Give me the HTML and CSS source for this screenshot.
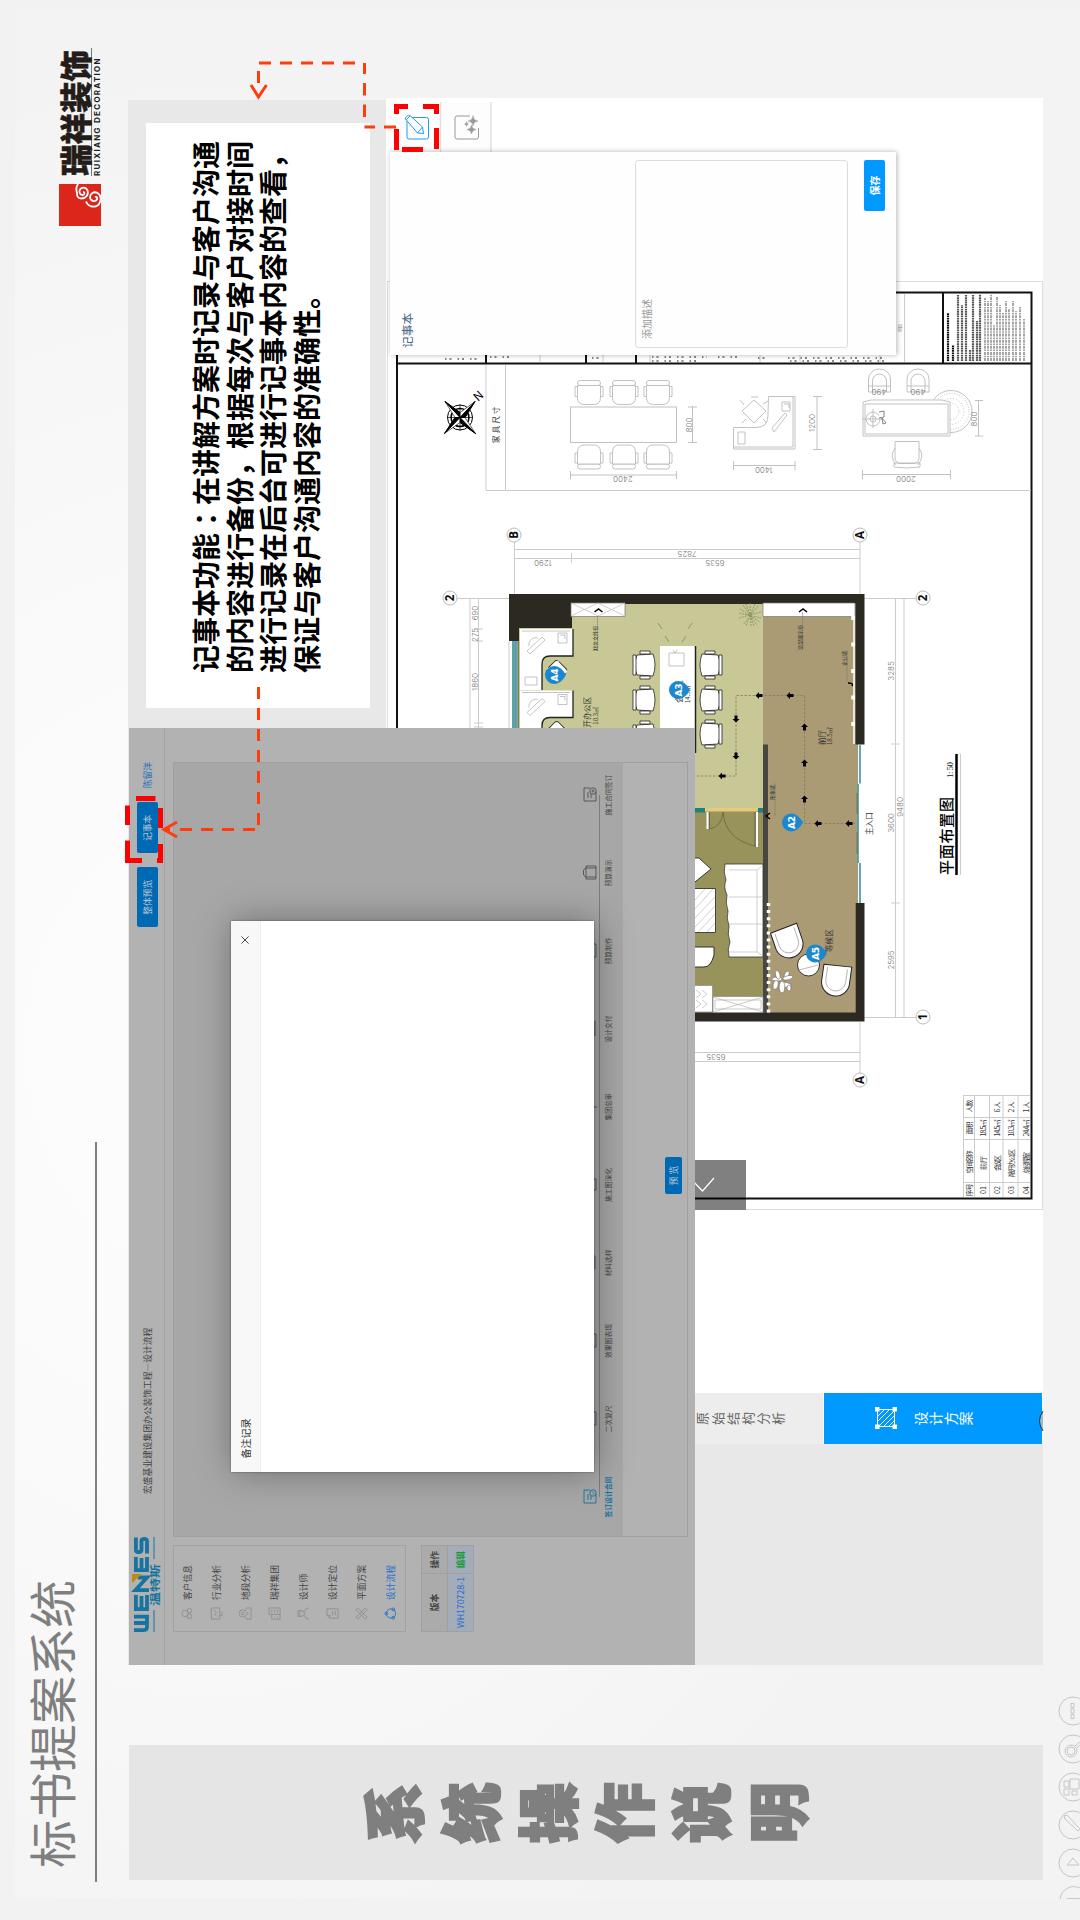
FILE: index.html
```html
<!DOCTYPE html>
<html lang="zh-CN">
<head>
<meta charset="utf-8">
<title>标书提案系统</title>
<link rel="stylesheet" href="styles.css">
</head>
<body>
<!-- A 1920x1080 slide turned a quarter turn counter-clockwise. -->
<main class="slide">
  <div class="paper"></div>
  <h1 class="title">标书提案系统</h1>
  <div class="rule"></div>

  <div class="brand">
    <svg class="brand-mark" viewBox="0 0 42 42">
      <rect width="42" height="42" fill="#dc261c"/>
      <g fill="none" stroke="#fff" stroke-width="1.800">
        <path d="M34 24c0 2-3 2-3-.5s3-4 5.500-2.500 3 6-1 7.500-8-1.500-8-6 3-4.500 6-4.500"/>
        <path d="M29 36c1 2-2 3-3.500 1s0-6 3.500-6 6 4 4 7.500-6 3.500-9 2.500-5-4-4.500-8 3-5 5-6"/>
        <path d="M33 18c3-1 6-1 9 1"/>
      </g>
    </svg>
    <div class="brand-name"><b>瑞祥装饰</b><i>RUIXIANG DECORATION</i></div>
  </div>

  <aside class="chapter"><span>系</span><span>统</span><span>操</span><span>作</span><span>说</span><span>明</span></aside>

  <section class="board"></section>
  <section class="note-card">
    <p>记事本功能<span lang="zh-TW">：</span>在讲解方案时记录与客户沟通<br>的内容进行备份，根据每次与客户对接时间<br>进行记录在后台可进行记事本内容的查看，<br>保证与客户沟通内容的准确性。</p>
  </section>

  <!-- design plan screen -->
  <section class="viewer">
    <nav class="tabs">
      <div class="tab"><span>原始结构分析</span></div>
      <div class="tab on">
        <svg width="22" height="22" viewBox="0 0 22 22" fill="none" stroke="#fff"><path d="M2.500 2.500h17v17h-17zM3 14l5 5M3 9l10 10M3 4l15 15M8 3l11 11M13 3l6 6"/><path d="M0 0h4.500v4.500H0zM17.500 0H22v4.500h-4.500zM0 17.500h4.500V22H0zM17.500 17.500H22V22h-4.500z" fill="#fff" stroke="none"/></svg>
        <span>设计方案</span>
      </div>
    </nav>
  </section>

  <svg class="layer" viewBox="0 0 1920 1080">
    <defs>
      <g id="seat"><rect x="-11.500" y="-12" width="23" height="5" rx="2.500"/><path d="M-11.500-7h23v12q0 7-7 7h-9q-7 0-7-7zM-11.500-6h-2.500V4h2.500M11.500-6H14V4h-2.500"/></g>
      <g id="chair"><path d="M-10-8Q0-12 10-8L11 8Q0 12-11 8z" transform="rotate(90)" fill="#fff" stroke="#222" stroke-width=".8"/><path d="M9-10h3v20H9z" fill="#fff" stroke="#222" stroke-width=".8"/><path d="M-5-14H5v3H-5zM-5 11H5v3H-5z" fill="#fff" stroke="#222" stroke-width=".8"/></g>
      <g id="desk"><path d="M0 0h53v27H30q-8 0-8 8v26H0z" fill="#fff"/><path d="M53 0v27H30q-8 0-8 8v26" fill="none" stroke="#222" stroke-width="1.300"/><path d="M7 22L22 8l3 3L10 25zM9 17a7 7 0 0 1 9-8M38 4h9v10h-9zM40 6h5v4M5 48h12v8H5zM2 2h48" fill="none" stroke="#aaa" stroke-width=".7"/></g>
      <path id="arw" d="M-3.500 0L0-3.500V-1.500H3.500V1.500H0V3.500z"/>
      <path id="pin" d="M12 0Q7 9 0 9A9 9 0 1 1 0-9Q7-9 12 0z"/>
      <g id="lounge"><path d="M-14-13L14-14V2a14 14 0 0 1-28 2z" fill="#fff" stroke="#222"/><path d="M-10-11V2a10 10 0 0 0 20 0V-11" fill="none" stroke="#999" stroke-width=".7"/></g>
      <g id="armchair" fill="none"><path d="M-11 11V-2a11 10 0 0 1 22 0v13zM-7 11V0a7 7 0 0 1 14 0v11M-11 5H11"/></g>
    </defs>
    <g transform="translate(1920 0) rotate(90)">
      <!-- sheet frame -->
      <rect x="387.500" y="281.500" width="655" height="928" fill="#fff" stroke="#ddd"/>
      <path d="M397 292.500H1031.500V1198.500H397z" fill="none" stroke="#111" stroke-width="2"/>
      <path d="M397 363.500H1031M943 293v70M486 355v8M586 355v8M636 355v8" stroke="#111" stroke-width="2"/>
      <path d="M904.500 294v68M505.500 365v125M486 365v125.500H1031M540 355v7M603 355v7M650 355v7M760 355v7M800 355v7M880 355v7" fill="none" stroke="#ccc"/>
      <path d="M445 359h36M490 357h25M592 358h10M652 357h55M718 357h20M758 358h12M788 358h96M652 361h50M790 361h94" stroke="#888" stroke-width="2" stroke-dasharray="1.500 3 2 6"/>
      <g stroke="#555" stroke-width="2.200" stroke-dasharray="1.700 .6">
        <path d="M948 361v-48" stroke="#111"/><path d="M953 361v-16" stroke="#111"/><path d="M958 361v-66M962 361v-56M966 361v-66M970 361v-11M973 361v-66M977 361v-40M980 361v-67"/>
      </g>
      <path d="M985 361v-63M988 361v-60M991 361v-67M994 361v-36M997 361v-64M1000 361v-56M1003 361v-48M1006 361v-60M1009 361v-52M1013 361v-60M1016 361v-50M1020 361v-55M1024 361v-42" stroke="#777" stroke-width="1.300" stroke-dasharray="3 .8 1.500 .8"/>
      <text class="tiny" transform="translate(902 332) rotate(-90)">项目</text>

      <!-- compass -->
      <g transform="translate(460 417.500)" stroke="#000">
        <circle r="12.500" fill="none"/><circle r="9" fill="none" stroke-width="1.500"/><path d="M-13 0H13M0-13V13" stroke-width=".7"/>
        <path d="M-15-16L0-5 15-16 5 0 15.500 16 0 5-15.500 16-5 0z" fill="#fff" stroke-width=".6"/>
        <path d="M-15-16L0-5V0zM15-16L5 0H0zM15.500 16L0 5V0zM-15.500 16L-5 0H0z"/>
      </g>
      <text transform="translate(478 402) rotate(-42)" font-size="12">N</text>
      <text class="song" transform="translate(499 443) rotate(-90)" font-size="7.500" letter-spacing="2.200">家具尺寸</text>

      <!-- furniture samples -->
      <g fill="#fff" stroke="#bbb" stroke-width=".9">
        <rect x="570.500" y="407" width="106" height="35.500"/>
        <use href="#seat" x="589" y="392.500"/><use href="#seat" x="624" y="392.500"/><use href="#seat" x="658" y="392.500"/>
        <use href="#seat" transform="translate(589 457) scale(1 -1)"/><use href="#seat" transform="translate(624 457) scale(1 -1)"/><use href="#seat" transform="translate(658 457) scale(1 -1)"/>
        <path d="M692.500 406v37M688 407h9M688 442.500h9M570 475h106.500M570.500 471v8M676.500 471v8"/>
        <path d="M768.500 396.500H795V449H733.500V427.500H756q12 0 12-12zM733.500 447H793V397M738 432h7v12h-7zM772 428l13-15 2 2-13 17zM782 402h8v9h-8zM784 404h5v4"/>
        <path d="M754 400l12 11-12 12-12-12zM744 405l-4-5M763 404l5-3M763 419l4 4M746 419l-4 4M751 397h7"/>
        <path d="M817 396v53M813 396.500h9M813 449.500h9M733.500 465.500h62M733.500 461v9M795 461v9M978.500 400v36M975 400.500h8M975 436h8M862.500 474.500h88M862.500 470v9M950.500 470v9"/>
        <circle cx="951" cy="411.500" r="21"/><circle cx="951" cy="411.500" r="18" stroke-dasharray="1 1.500"/><circle cx="951" cy="411.500" r="13" stroke-dasharray="1 2"/><circle cx="951" cy="411.500" r="8" stroke-dasharray="1 2"/>
        <path d="M863 402l8-2h71l8 2v34h-87zM865 404h83v30h-83z"/>
        <circle cx="873" cy="419" r="7"/><circle cx="873" cy="419" r="3"/><path d="M862 419h20M873 409v19"/>
        <path d="M879 412l5-1v6l-5 1M882 418l4 5-3 1z" stroke="#777"/>
        <use href="#armchair" x="879.500" y="381"/><use href="#armchair" x="918" y="381"/>
        <path d="M895 441.500h24v17q0 3-4 5h-16q-4-2-4-5zM895 448q-6 8 1 17M919 448q6 8-1 17M894 463h26v4q-13 2-26 0z"/>
      </g>
      <g class="dim">
        <text transform="translate(692 425) rotate(-90)">800</text><text transform="translate(623 476) rotate(180)">2400</text>
        <text transform="translate(815 423) rotate(-90)">1200</text><text transform="translate(764 467) rotate(180)">1400</text>
        <text transform="translate(977 419) rotate(-90)">800</text><text transform="translate(906 476) rotate(180)">2000</text>
        <text transform="translate(879 389) rotate(180)">490</text><text transform="translate(918 389) rotate(180)">490</text>
      </g>

      <!-- axes and dimensions -->
      <path d="M514.500 542v52M860 542v52M514 549.500h346M514 558.500h346M571.500 553v10M457 598.500h52M864 598.500h52M470 598v140M478.500 598v140M474 629h9M474 641h9M474 723h9M474 727h9M509 641v90M895.500 598v419M904 598v419M891 744h9M891 903h9M864 1017.500h52M690 1052.500h170M690 1061.500h170M860 1022v52" fill="none" stroke="#ccc"/>
      <g fill="#fff" stroke="#bbb"><circle cx="514" cy="535" r="7"/><circle cx="860" cy="535" r="7"/><circle cx="450" cy="598" r="7"/><circle cx="923" cy="598" r="7"/><circle cx="923" cy="1017" r="7"/><circle cx="860" cy="1080" r="7"/></g>
      <g class="axis"><text transform="translate(518 535) rotate(-90)">B</text><text transform="translate(864 535) rotate(-90)">A</text><text transform="translate(454 598) rotate(-90)">2</text><text transform="translate(927 598) rotate(-90)">2</text><text transform="translate(927 1017) rotate(-90)">1</text><text transform="translate(864 1080) rotate(-90)">A</text></g>
      <g class="dim">
        <text transform="translate(687 550.500) rotate(180)">7825</text><text transform="translate(543 559.500) rotate(180)">1290</text><text transform="translate(715 559.500) rotate(180)">6535</text>
        <text transform="translate(477.500 613) rotate(-90)">690</text><text transform="translate(477.500 635) rotate(-90)">275</text><text transform="translate(477.500 682) rotate(-90)">1860</text>
        <text transform="translate(894 671) rotate(-90)">3285</text><text transform="translate(894 823) rotate(-90)">3600</text><text transform="translate(903 807) rotate(-90)">9480</text><text transform="translate(894 960) rotate(-90)">2595</text>
        <text transform="translate(716 1054) rotate(180)">6535</text>
      </g>

      <!-- rooms -->
      <path d="M518 602H764V810H518z" fill="#c8c896"/>
      <path d="M763 602h95v413h-95z" fill="#ab9b75"/>
      <path d="M690 810h73v205h-73z" fill="#97935a"/>
      <path d="M509 594H864.500V744.500H855.500V604H572V628H519V641H509zM855.700 903h8.800v118.500H690v-9H855.700z" fill="#2b2922"/>
      <path d="M763 744.500h5V1013h-5z" fill="#474641"/>
      <path d="M512 641h5v90h-5z" fill="#5ba3a6"/><path d="M518 641v90" stroke="#333"/>
      <path d="M860 744.500v39M860 863v40M858 784v79" stroke="#4fa3a3" stroke-width="1.800"/><path d="M857 793v21M857 832v22" stroke="#7c6f50"/>
      <path d="M690 808h15v4.500h-15zM757 808h6v4.500h-6z" fill="#1f8080"/><path d="M705 808h53v3.500h-53z" fill="#e8c97a"/>
      <path d="M707.500 812v17M757 812v35" stroke="#fff" stroke-width="2"/><path d="M709.500 812v17M755 812v35" stroke="#555" stroke-width=".7"/>
      <path d="M709 829q13-2 14-17q2 27 32 34" fill="none" stroke="#6b683c" stroke-width=".8"/>
      <path d="M571 603h54v13.500h-54zM763 603h92v13.500h-92z" fill="#fff" stroke="#777" stroke-width=".7"/>
      <path d="M571 603l27 13 27-13M571 616l27-13 27 13" fill="none" stroke="#bbb" stroke-width=".7"/>
      <path d="M594.500 612l4-3 4 3M799 612l4-3 4 3M848 683q6 0 4 3M770 813l-4 3 4 3" fill="none" stroke="#000" stroke-width="1.500"/>
      <path d="M597.500 616v35M802.500 612v38M847 650v32M775 783v33" stroke="#777" stroke-width=".5"/>
      <path d="M854 616v128" stroke="#fff" stroke-width="1.500"/><path d="M853 616v128" stroke="#fff" stroke-width="3.500" stroke-dasharray="4 22.500"/>
      <path d="M750 615m-11-2l22 5M743 605l14 20M750 603l1 24M758 606l-15 19M761 612l-22 6M740 609l20 13M746 604l8 22M755 604l-9 22" fill="none" stroke="#7f8a5c" stroke-width=".8" stroke-dasharray="2 1"/>
      <path d="M658 623l4 6M665 636l4 6M692 623l-4 6M686 636l-4 6" stroke="#8f9468"/>
      <use href="#desk" x="520" y="629"/><use href="#desk" x="520" y="690.500"/>
      <g transform="translate(556 670) rotate(45)"><rect x="-7" y="-8" width="16" height="16" rx="3" fill="#fff" stroke="#333" stroke-dasharray="12 3"/></g>
      <g transform="translate(556 731) rotate(45)"><rect x="-7" y="-8" width="16" height="16" rx="3" fill="#fff" stroke="#333"/></g>
      <path d="M660 646h35v107h-35z" fill="#fff"/><path d="M695.500 646v107" stroke="#222" stroke-width="1.500"/><path d="M669 653h15v13h-15zM673 650l2 3 2-3" fill="none" stroke="#aaa" stroke-width=".7"/>
      <use href="#chair" transform="translate(645 665) scale(-1 1)"/><use href="#chair" transform="translate(645 700) scale(-1 1)"/><use href="#chair" transform="translate(645 735) scale(-1 1)"/>
      <use href="#chair" x="710" y="665"/><use href="#chair" x="710" y="700"/><use href="#chair" x="710" y="734"/>
      <path d="M855 823.500H804.500V695.500H736V776H690" fill="none" stroke="#7d7f57" stroke-width=".8" stroke-dasharray="2.500 1.500"/>
      <use href="#arw" x="849" y="823.500"/><use href="#arw" x="818" y="823.500"/><use href="#arw" x="790" y="695.500"/><use href="#arw" x="759" y="695.500"/><use href="#arw" x="722" y="776"/>
      <use href="#arw" transform="translate(804.500 799) rotate(90)"/><use href="#arw" transform="translate(804.500 763) rotate(90)"/><use href="#arw" transform="translate(804.500 727) rotate(90)"/>
      <use href="#arw" transform="translate(736 719) rotate(-90)"/><use href="#arw" transform="translate(736 756) rotate(-90)"/>
      <!-- lounge furniture -->
      <path d="M729 864h34v93h-34q-2-8 1-15-3-8-1-16-3-8-1-15-3-8-1-16-4-8-1-15-3-8-1-16z" fill="#fff" stroke="#333" stroke-width=".8"/>
      <path d="M757 870v82M729 870h28l5-4M729 952h28l5 3M729 897h34M729 924h34" fill="none" stroke="#bbb" stroke-width=".7"/>
      <path d="M690 858h9l12 11-16 13h-5zM690 947h24v8q-3 12-10 12h-14z" fill="#fff" stroke="#333"/>
      <path d="M690 888.500h25.500v44H690z" fill="#fff" stroke="#444"/><path d="M695 900l10-11M695 909l18-20M695 918l20-21M695 927l20-21M698 932l17-18M707 932l8-9" stroke="#bbb" stroke-width=".7"/>
      <path d="M690 985.500h22.500v26.500H690zM713 996.500h50v16h-50z" fill="#fff" stroke="#888" stroke-width=".7"/><path d="M713 997l50 15M713 1012l50-15M715 1000h46v9h-46zM696 990l5 4-5 4M702 990l5 4-5 4M696 1000l5 4-5 4M702 1000l5 4-5 4" fill="none" stroke="#aaa" stroke-width=".6"/>
      <path d="M768.500 903v110" stroke="#fff" stroke-width="3.500" stroke-dasharray="3 4.100"/>
      <use href="#lounge" transform="translate(788 941) rotate(-19)"/><use href="#lounge" transform="translate(836 979) rotate(8)"/>
      <circle cx="808.500" cy="965" r="11" fill="#fff" stroke="#333"/><path d="M799 970l19-5" stroke="#bbb"/>
      <g transform="translate(782 979)" fill="#fff" stroke="#555" stroke-width=".5">
        <ellipse cx="-5" rx="5" ry="2"/><ellipse cx="-3" cy="-5" rx="2.200" ry="4.500" transform="rotate(-15)"/><ellipse cx="3" cy="-5" rx="2.200" ry="4.500" transform="rotate(20)"/><ellipse cx="6" rx="5" ry="2" transform="rotate(-12)"/><ellipse cx="5" cy="5" rx="5" ry="2.400" transform="rotate(10)"/><ellipse cx="0" cy="8" rx="2.800" ry="6"/><ellipse cx="-5" cy="7" rx="2.500" ry="4.500" transform="rotate(12)"/><ellipse cx="7" cy="9" rx="2" ry="3"/>
      </g>

      <g class="song room">
        <text transform="translate(590 697) rotate(-90)" text-anchor="end">敞开办公区</text><text transform="translate(597.500 707) rotate(-90)" text-anchor="end" font-size="6">10.3㎡</text>
        <text transform="translate(825 745) rotate(-90)">前厅</text><text transform="translate(832 745) rotate(-90)" font-size="6">18.5㎡</text>
        <text transform="translate(871.500 835) rotate(-90)">主入口</text><text transform="translate(832 952) rotate(-90)">等候区</text>
        <text class="t5" transform="translate(597 651) rotate(-90)">财务文件柜</text><text class="t5" transform="translate(801.500 650) rotate(-90)">造型展示柜</text><text class="t5" transform="translate(846 666) rotate(-90)">企业墙</text><text class="t5" transform="translate(774 800) rotate(-90)">形象墙</text>
        <text transform="translate(682 703) rotate(-90)">会议区</text><text transform="translate(690 703) rotate(-90)" font-size="6">14.5㎡</text>
      </g>
      <g fill="#1b87d0"><use href="#pin" x="554" y="675"/><use href="#pin" x="678" y="690"/><use href="#pin" x="791" y="822.500"/><use href="#pin" x="815" y="953.500"/></g>
      <g class="pin"><text transform="translate(557.500 675) rotate(-90)">A4</text><text transform="translate(681.500 690) rotate(-90)">A3</text><text transform="translate(794.500 822.500) rotate(-90)">A2</text><text transform="translate(818.500 953.500) rotate(-90)">A5</text></g>

      <!-- drawing title -->
      <text class="sheet-title" transform="translate(952 875) rotate(-90)" textLength="78">平面布置图</text>
      <text class="scale" transform="translate(953 778) rotate(-90)" textLength="16">1: 50</text>
      <path d="M956.500 754v121" stroke="#000" stroke-width="2.500"/><path d="M960.500 754v121" stroke="#ccc"/>

      <!-- room schedule -->
      <path d="M963.500 1095v102M974.500 1095v102M989.500 1095v102M1003 1095v102M1018 1095v102M963 1095.500h67M963 1117.500h67M963 1139.500h67M963 1182.500h67" stroke="#ccc"/>
      <g class="song cell">
        <text transform="translate(972 1190) rotate(-90)" textLength="13">序号</text><text transform="translate(972 1162) rotate(-90)" textLength="23">空间名称</text><text transform="translate(972 1128) rotate(-90)" textLength="13">面积</text><text transform="translate(972 1106) rotate(-90)" textLength="13">人数</text>
        <text transform="translate(986 1190) rotate(-90)">01</text><text transform="translate(986 1163) rotate(-90)">前厅</text><text transform="translate(986 1128) rotate(-90)" textLength="17">18.5㎡</text>
        <text transform="translate(1000 1190) rotate(-90)">02</text><text transform="translate(1000 1163) rotate(-90)" textLength="16">会议区</text><text transform="translate(1000 1128) rotate(-90)" textLength="17">14.5㎡</text><text transform="translate(1000 1107) rotate(-90)">6人</text>
        <text transform="translate(1014 1190) rotate(-90)">03</text><text transform="translate(1014 1163) rotate(-90)" textLength="28">敞开办公区</text><text transform="translate(1014 1128) rotate(-90)" textLength="17">10.3㎡</text><text transform="translate(1014 1107) rotate(-90)">2人</text>
        <text transform="translate(1028.500 1190) rotate(-90)">04</text><text transform="translate(1028.500 1163) rotate(-90)" textLength="22">总经理室</text><text transform="translate(1028.500 1128) rotate(-90)" textLength="17">24.4㎡</text><text transform="translate(1028.500 1107) rotate(-90)">1人</text>
      </g>

      <!-- previous-page button -->
      <path d="M690 1160h56v50h-56z" fill="#808080"/><path d="M690 1198.500h56" stroke="#050505" stroke-width="2"/>
      <path d="M691 1179l11.500 12 11.500-13" fill="none" stroke="#fff" stroke-width="1.200"/>

      <!-- toolbar cells -->
      <path d="M387 102h104v50H387z" fill="#fdfdfd"/><path d="M440.500 102v50M491 102v50" stroke="#e2e2e2" stroke-width="1.500"/>
      <g fill="none" stroke="#1f9bf5"><rect x="407" y="117.500" width="21.500" height="21.500" rx="2"/><path d="M405.500 119l12 14 6 .5-1-6.500-12-11q-2-1.500-4 .5t-1 2.500zM410 116l-4 4M417.500 133l5-6" fill="#fff"/></g>
      <g fill="none" stroke="#999"><path d="M470 116h-13q-2 0-2 2v19q0 2 2 2h19.500q2 0 2-2v-9"/><path d="M473 115.500q.5 5 5 5.500-4.500.5-5 5-.5-4.500-5-5 4.500-.5 5-5zM471.500 125q.5 4 4.500 4.500-4 .5-4.500 4.500-.5-4-4.500-4.500 4-.5 4.500-4.500zM466.500 121.500q0 2 2 2.500-2 0-2 2.500 0-2-2-2.500 2 0 2-2.500z" fill="#999" stroke-width=".5"/></g>
    </g>
  </svg>

  <section class="notebook">
    <h2>记事本</h2>
    <div class="notebook-input">添加描述</div>
    <button class="save">保存</button>
  </section>

  <!-- admin screen with the remarks dialog -->
  <section class="admin">
    <header class="admin-head">
      <svg class="wenes" viewBox="0 0 95 28">
        <g fill="none" stroke="#17739f" stroke-width="3.800">
          <path d="M1.900 1v10q0 3 3 3h10.500V1M9 1v13"/>
          <path d="M37 2.900H22.900V14H37M22 8.500H36"/>
          <path d="M41.900 16V2.500L54.500 14V5"/>
          <path d="M75 2.900H61.900V14H75M61 8.500H74"/>
          <path d="M94.500 2.900H82q-2 0-2 2.800t2 2.800h9q2 0 2 2.800T91 14H78.500"/>
        </g>
        <path d="M49-1H58V9z" fill="#bd8a14"/>
        <path d="M0 21h22M73 21h22" stroke="#17739f"/>
        <text x="26" y="26" textLength="42" lengthAdjust="spacingAndGlyphs" fill="#17739f" font-size="10.500" font-weight="700">温特斯</text>
      </svg>
      <span class="project">宏盛基业建设集团办公装饰工程—设计流程</span>
      <button class="btn wide">整体预览</button>
      <button class="btn">记事本</button>
      <span class="user">陈留洋</span>
    </header>
    <div class="admin-body">
      <div class="side">
        <ul class="menu">
          <li><svg viewBox="0 0 14 14"><circle cx="7" cy="4.500" r="3.500"/><circle cx="4" cy="9" r="2.500"/><circle cx="10" cy="9" r="2.500"/></svg>客户信息</li>
          <li><svg viewBox="0 0 14 14"><path d="M1 1.500h12v9H1zM4 7l2-2 2 2 3-3M5 10.500V13h4"/></svg>行业分析</li>
          <li><svg viewBox="0 0 14 14"><path d="M7 10Q3 6 3 4a4 4 0 0 1 8 0q0 2-4 6zM3 7L1 8v5h12V8l-2-1"/><circle cx="7" cy="4" r="1.500"/></svg>地段分析</li>
          <li><svg viewBox="0 0 14 14"><path d="M1 13V4h5V1h7v12zM6 4v9M8 4h3M8 7h3M8 10h3M3 7h1M3 10h1"/></svg>瑞祥集团</li>
          <li><svg viewBox="0 0 14 14"><path d="M4 1h6v4q0 3-3 3T4 5zM3 3h8M1 13q0-4 4-5M13 13q0-4-4-5"/></svg>设计师</li>
          <li><svg viewBox="0 0 14 14"><path d="M5 1h7v12H2V4zM5 1v3H2M5 7h5M5 10h5"/></svg>设计定位</li>
          <li><svg viewBox="0 0 14 14"><path d="M1 3l2-2 10 10-2 2zM11 1l2 2L3 13l-2-2z"/></svg>平面方案</li>
          <li class="on"><svg viewBox="0 0 14 14"><circle cx="7" cy="7.500" r="5"/><circle cx="7" cy="2.500" r="1.500"/><circle cx="2.500" cy="10" r="1.500"/><circle cx="11.500" cy="10" r="1.500"/></svg>设计流程</li>
        </ul>
        <table class="versions">
          <tr><th>版本</th><th>操作</th></tr>
          <tr><td>WH170728-1</td><td class="edit">编辑</td></tr>
        </table>
      </div>
      <div class="stage">
        <ol class="flow">
          <li class="on"><svg viewBox="0 0 15 14"><path d="M1 13V1h13v6M1 13h9M4 5h6M4 8h4"/><circle cx="11" cy="10" r="3.200"/><path d="M9.500 10l1 1 2-2"/></svg>签订设计合同</li>
          <li><svg viewBox="0 0 15 14"><path d="M1 1h13v12H1z"/></svg>二次复尺</li>
          <li><svg viewBox="0 0 15 14"><path d="M1 1h13v12H1z"/></svg>效果图表现</li>
          <li><svg viewBox="0 0 15 14"><path d="M1 1h13v11H1z"/></svg>材料选样</li>
          <li><svg viewBox="0 0 15 14"><path d="M2 1h11v12H2z"/></svg>施工图深化</li>
          <li><svg viewBox="0 0 15 14"><path d="M7 1v13"/></svg>集团总审</li>
          <li><svg viewBox="0 0 15 14"><path d="M0 1h15v11H0z"/></svg>设计交付</li>
          <li><svg viewBox="0 0 15 14"><path d="M1 1h13v12H1z"/></svg>预算制作</li>
          <li><svg viewBox="0 0 15 14"><path d="M1 3h13v10H1zM3 3l2-2.500h5L12 3v10M3 3v10"/></svg>预算演示</li>
          <li><svg viewBox="0 0 15 14"><path d="M1 13V1h13v6M1 13h9M4 5h6M4 8h4"/><circle cx="11" cy="10" r="3.200"/><circle cx="11" cy="10" r="1"/></svg>施工合同签订</li>
        </ol>
        <button class="btn preview">预 览</button>
      </div>
    </div>
    <div class="dialog">
      <header>备注记录<svg viewBox="0 0 9 9"><path d="M.5.5l8 8M8.500.5l-8 8"/></svg></header>
    </div>
  </section>

  <!-- callouts and slide-show controls -->
  <svg class="layer" viewBox="0 0 1920 1080">
    <g transform="translate(1920 0) rotate(90)">
      <g fill="none" stroke="#ff3c0c" stroke-width="3">
        <path d="M396 127H364.500" stroke-dasharray="12 9"/><path d="M364.500 117V63" stroke-dasharray="12.500 9"/><path d="M355 63H259" stroke-dasharray="12 9"/><path d="M258.500 71V83"/><path d="M251 85l7.500 12 8-12"/>
        <path d="M258.500 687V826" stroke-dasharray="12 9"/><path d="M255 829.500H178" stroke-dasharray="12 9"/><path d="M177 822l-13 7.500 13 7.500M164 829.500h6"/>
      </g>
      <path fill="#f00" d="M394 104h14v5h-9v5h-5zM423 104h16v10h-5v-5h-11zM434 128h5v21h-5zM394 129h5v21h-5zM402 147h21v5h-21zM136 796h19.500v5H136zM125 805.500h5V825h-5zM158 808h5v20h-5zM125 840.500h5V858h12v5h-17zM158 844h5v19h-6v-5h1z"/>
      <path d="M1043 1411q-7 10 0 20" fill="#9cb8d0" stroke="#234"/>
      <g fill="none" stroke="#c6c6c6">
        <circle cx="1073" cy="1711" r="14"/><circle cx="1073" cy="1749" r="14"/><circle cx="1073" cy="1787" r="14"/><circle cx="1073" cy="1825" r="14"/><circle cx="1073" cy="1863" r="14"/><path d="M1060 1899a14 14 0 0 1 20-11M1067 1898.500h13"/>
        <path d="M1071 1703.500h3v4h-3zM1071 1709h3v4h-3zM1071 1714.500h3v4h-3zM1075 1746l6-5M1077 1748l4-4M1064 1781h5v6h-5zM1070 1779h9v10h-9zM1064 1789h5v6h-5zM1072 1791h5v4h-5zM1064 1816l3-1 13 14-2 2-13-12zM1073 1858l6 7h-12z"/><circle cx="1071" cy="1751" r="6"/><circle cx="1071" cy="1751" r="4"/>
      </g>
    </g>
  </svg>
</main>
</body>
</html>
```
FILE: styles.css
```css
* { box-sizing: border-box; }
body {
  margin: 0;
  width: 1080px;
  height: 1920px;
  overflow: hidden;
  position: relative;
  background: #f2f2f2;
  font-family: "Noto Sans CJK SC", "Noto Sans", sans-serif;
}
ul, ol { list-style: none; margin: 0; padding: 0; }
h1, h2, p { margin: 0; font-weight: 400; }
button { border: 0; padding: 0; font: inherit; }

/* overlapping windows on the slide canvas */
.slide {
  position: absolute;
  left: 0;
  top: 0;
  width: 1920px;
  height: 1080px;
  transform-origin: 0 0;
  transform: translateY(1920px) rotate(-90deg);
}
.slide > * { position: absolute; }
.layer { left: 0; top: 0; width: 1920px; height: 1080px; }
.layer text { font-family: "Noto Sans CJK SC", sans-serif; }

.paper {
  left: 21px; top: 15px; right: 9px; bottom: 0;
  background: radial-gradient(ellipse 1000px 800px at 45% 18%, #fdfdfd 0%, #fafafa 45%, #f3f3f3 100%);
}
.title {
  left: 52px; top: 19px;
  font-size: 48px;
  line-height: 62px;
  font-weight: 400;
  color: #7f7f7f;
  white-space: nowrap;
}
.rule { left: 38px; top: 95px; width: 740px; height: 2px; background: #7f7f7f; }

.brand { left: 1694px; top: 59px; display: flex; gap: 8px; }
.brand-mark { width: 42px; height: 42px; }
.brand-name { width: 128px; color: #231c19; }
.brand-name b {
  display: block;
  height: 33px;
  border-bottom: 1.5px solid #777;
  font-size: 31.5px;
  line-height: 31px;
  font-weight: 900;
  white-space: nowrap;
  -webkit-text-stroke: .5px #231c19;
}
.brand-name i {
  display: block;
  font: 700 8px/10px Inter, sans-serif;
  letter-spacing: 1.28px;
  white-space: nowrap;
}

.chapter {
  left: 40px; top: 129px; width: 135px; height: 914px;
  padding-top: 228px;
  background: #e5e5e5;
  display: flex;
  flex-direction: column;
  align-items: center;
  font-size: 61px;
  font-weight: 900;
  line-height: 76.800px;
  color: #7f7f7f;
  -webkit-text-stroke: 2.200px #7f7f7f;
}
.chapter span { margin-right: 1px; position: relative; top: -3px; }

.board { left: 255px; top: 128px; width: 1565px; height: 915px; background: #e8e8e8; }
.note-card {
  left: 1212px; top: 146px; width: 585px; height: 224px;
  padding: 43px 0 0 35px;
  background: #fff;
}
.note-card p {
  font-size: 28px;
  line-height: 33.700px;
  font-weight: 700;
  color: #000;
  white-space: nowrap;
}
.note-card span { font-family: "Noto Sans CJK TC", sans-serif; }

.viewer { left: 476px; top: 386px; width: 1346px; height: 657px; background: #fff; }
.tabs { width: 51px; height: 657px; display: flex; flex-direction: column; }
.tab {
  height: 438px;
  padding-top: 310px;
  background: #ededed;
  color: #666;
  font-size: 13px;
  letter-spacing: 2.100px;
  writing-mode: vertical-rl;
  display: flex;
  align-items: center;
  white-space: nowrap;
  border-bottom: 1px solid #fff;
}
.tab span { text-orientation: upright; }
.tab.on { height: 219px; padding-top: 51px; gap: 17px; background: #09f; color: #fff; font-size: 14px; letter-spacing: 1px; }
.tab.on svg { display: block; flex: none; }

.dim text { font-family: Inter, sans-serif; font-size: 8px; font-weight: 300; fill: #777; text-anchor: middle; }
.axis text { font-family: "Open Sans", sans-serif; font-size: 11.500px; font-weight: 700; text-anchor: middle; fill: #111; }
.layer .song, .layer .song text { font-family: "Noto Sans CJK SC", sans-serif; fill: #333; }
.layer .scale { font-family: "Liberation Serif", serif; font-size: 9px; fill: #222; }
.room { font-size: 7.600px; }
.room .t5 { font-size: 5px; }
.cell { font-size: 7px; text-anchor: middle; }
.pin text { font-family: "DejaVu Sans", sans-serif; font-size: 9px; font-weight: 700; fill: #fff; text-anchor: middle; }
.sheet-title { font-size: 15px; font-weight: 500; }
.tiny { font-size: 4px; fill: #777; }

.notebook {
  left: 1565px; top: 390px; width: 203px; height: 506px;
  padding: 8px 8px 11px 7px;
  background: #fefefe;
  box-shadow: 0 1px 5px rgba(0, 0, 0, .3);
  display: flex;
  flex-direction: column;
}
.notebook h2 { height: 237px; font-size: 11.700px; line-height: 17px; color: #4a6a88; }
.notebook-input {
  height: 213px;
  border: 1px solid #ddd;
  border-radius: 3px;
  padding: 3px 8px;
  font-size: 10px;
  color: #999;
}
.save {
  width: 51px; height: 21px;
  margin: 16px 0 0 auto;
  border-radius: 2px;
  background: #09f;
  color: #fff;
  font-size: 10px;
  font-weight: 700;
}

.admin { left: 255px; top: 129px; width: 937px; height: 566px; background: #b2b2b2; font-size: 8.750px; color: #444; }
.admin-head {
  height: 36px;
  padding: 1px 34px 0 33px;
  border-bottom: 1px solid #a3a3a3;
  display: flex;
  align-items: center;
}
.wenes { width: 95px; height: 28px; overflow: visible; }
.project { margin: 0 auto 0 43px; white-space: nowrap; }
.btn { width: 51px; height: 21px; border-radius: 2px; background: #0069b3; color: #b5c6d6; }
.btn.wide { width: 60px; margin-right: 14px; }
.user { margin-left: 14px; color: #1b6fb8; }
.admin-body { display: flex; gap: 8.500px; padding: 7.500px 0 0 33px; }
.side { width: 86.500px; }
.menu { height: 233px; border: 1px solid #a2a2a2; }
.menu li { height: 28.900px; padding-left: 11px; display: flex; align-items: center; gap: 7px; }
.menu svg { width: 13px; height: 13px; fill: none; stroke: #8c8c8c; stroke-width: .9; }
.menu .on { color: #1c6fd0; }
.menu .on svg { stroke: #1c6fd0; }
.versions { width: 86.500px; margin-top: 15px; border-collapse: collapse; table-layout: fixed; text-align: center; }
.versions th, .versions td { height: 26px; padding: 0; border: 1px solid #a0a0a0; }
.versions th { background: #ababab; }
.versions th:first-child { width: 58px; }
.versions td { background: #a3acb8; color: #1c6fd0; white-space: nowrap; }
.versions .edit { color: #169a3c; font-weight: 700; }
.stage {
  width: 775px; height: 515.500px;
  border: 1px solid #a0a0a0;
  background: linear-gradient(#a7a7a7 449px, #b2b2b2 449px);
  display: flex;
  flex-direction: column;
  align-items: flex-start;
}
.flow {
  display: grid;
  grid-template-columns: repeat(10, 78px);
  margin: 409px 0 0 0;
  background: linear-gradient(#7c7c7c, #7c7c7c) 39px 16px / 702px 1px no-repeat;
}
.flow li { height: 40px; display: flex; flex-direction: column; align-items: center; gap: 6px; font-size: 6.800px; line-height: 10px; white-space: nowrap; }
.flow svg { width: 15px; height: 14px; fill: none; stroke: #505050; stroke-width: .9; }
.flow .on { color: #17739f; font-weight: 700; }
.flow .on svg { stroke: #17739f; }
.preview { width: 37px; height: 17.500px; margin: 42px 0 0 342px; }

.dialog {
  position: absolute;
  left: 192.500px; top: 101.500px; width: 551.500px; height: 363px;
  background: #fff;
  box-shadow: 0 2px 34px rgba(0, 0, 0, .34), 0 0 2px rgba(0, 0, 0, .4);
}
.dialog header {
  height: 30px;
  padding: 0 15px 0 14px;
  background: #f8f8f8;
  border-bottom: 1px solid #eee;
  display: flex;
  align-items: center;
  justify-content: space-between;
  font-size: 10px;
  color: #333;
}
.dialog svg { width: 8px; height: 8px; stroke: #333; fill: none; }
```
